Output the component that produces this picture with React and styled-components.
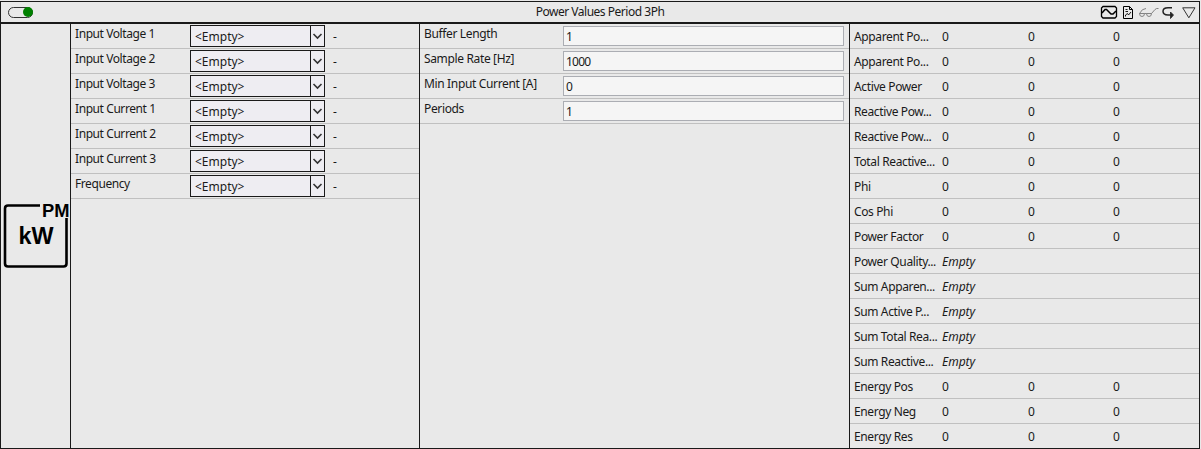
import React from 'react';
import styled, { createGlobalStyle, ThemeProvider } from 'styled-components';

const theme = {
   bg: '#e9e9e9',
   line: '#1a1a1a',
   rule: '#c0c0c0',
   text: '#1a1a1a',
   select: '#eeedf2',
   input: '#f5f5f5',
   inputBorder: '#abadb3',
   green: '#008000'
};

const inputs = [
   'Input Voltage 1',
   'Input Voltage 2',
   'Input Voltage 3',
   'Input Current 1',
   'Input Current 2',
   'Input Current 3',
   'Frequency'
];

const settings = [
   { label: 'Buffer Length', value: '1' },
   { label: 'Sample Rate [Hz]', value: '1000' },
   { label: 'Min Input Current [A]', value: '0' },
   { label: 'Periods', value: '1' }
];

const outputs = [
   { label: 'Apparent Po...', values: [0, 0, 0] },
   { label: 'Apparent Po...', values: [0, 0, 0] },
   { label: 'Active Power', values: [0, 0, 0] },
   { label: 'Reactive Pow...', values: [0, 0, 0] },
   { label: 'Reactive Pow...', values: [0, 0, 0] },
   { label: 'Total Reactive...', values: [0, 0, 0] },
   { label: 'Phi', values: [0, 0, 0] },
   { label: 'Cos Phi', values: [0, 0, 0] },
   { label: 'Power Factor', values: [0, 0, 0] },
   { label: 'Power Quality...' },
   { label: 'Sum Apparen...' },
   { label: 'Sum Active P...' },
   { label: 'Sum Total Rea...' },
   { label: 'Sum Reactive...' },
   { label: 'Energy Pos', values: [0, 0, 0] },
   { label: 'Energy Neg', values: [0, 0, 0] },
   { label: 'Energy Res', values: [0, 0, 0] }
];

const HeaderIcons = () => (
   <svg width="100" height="16" viewBox="0 0 100 16" fill="none" stroke="#000">
      <path d="M4 2.500 h12 l1.500 1.500 v8.500 l-1.500 1.500 h-12 l-1.500 -1.500 v-8.500z" strokeWidth="1.300" />
      <path d="M3 9 L6 5.500 H7.500 L12 10 H14 L17 7" strokeWidth="1.500" />
      <path d="M24.500 2.500 h6 l3 3 v9 h-9z M30.500 2.500 v3 h3" />
      <path d="M26.500 5.500 h2 M26.500 7.500 h2.500 M26.500 12.500 v-1.500 l2-1.500 1 1.500 2.500-3" strokeWidth="0.900" />
      <g stroke="#777" strokeWidth="0.900">
         <path d="M40.500 9.500 h5 q0 3-2.500 3 q-2.500 0-2.500-3z M47.500 9.500 h5 q0 3-2.500 3 q-2.500 0-2.500-3z M45.500 9.500 h2" />
         <path d="M40.500 9.500 Q43 4.500 47 4.500 M52.500 9.500 L56 5.500 Q57.500 4 59.500 4.500" />
      </g>
      <path d="M73 3.700 h-4 q-5 0-5 3.600 q0 3.700 5 3.700 h3" stroke="#222" strokeWidth="1.500" />
      <path d="M71.500 8 l3 3 -3 3.500z" fill="#222" stroke="#222" strokeWidth="0.800" />
      <path d="M83.700 3.800 h12.300 l-6.150 10z" stroke="#333" />
   </svg>
);

const Logo = () => (
   <LogoSvg width="70" height="72" viewBox="0 0 70 72">
      <path d="M39 6.500 H7 Q4 6.500 4 9.500 V64.500 Q4 67.500 7 67.500 H62.500 Q65.500 67.500 65.500 64.500 V19" fill="none" stroke="#000" strokeWidth="2.600" />
      <text x="41" y="17.500" fontSize="18" textLength="27.500" lengthAdjust="spacingAndGlyphs">PM</text>
      <text x="17.500" y="45" fontSize="23" textLength="35" lengthAdjust="spacingAndGlyphs">kW</text>
   </LogoSvg>
);

const App = () => (
   <ThemeProvider theme={theme}>
      <GlobalStyle />
      <Block>
         <Header>
            <Toggle><Knob /></Toggle>
            <Title>Power Values Period 3Ph</Title>
            <HeaderIcons />
         </Header>
         <Body>
            <IconColumn><Logo /></IconColumn>
            <Column>
               {inputs.map(label => (
                  <Row key={label}>
                     <Label $width={115} $spacing="-0.42px">{label}</Label>
                     <Select>
                        <SelectValue>&lt;Empty&gt;</SelectValue>
                        <SelectArrow>
                           <svg width="12" height="10" viewBox="0 0 12 10">
                              <path d="M1.500 3 L5.500 7 L9.500 3" fill="none" stroke="#333" strokeWidth="1.600" />
                           </svg>
                        </SelectArrow>
                     </Select>
                     <Unit>-</Unit>
                  </Row>
               ))}
            </Column>
            <Column>
               {settings.map(({ label, value }) => (
                  <Row key={label}>
                     <Label $width={139} $spacing="-0.35px">{label}</Label>
                     <Field>{value}</Field>
                  </Row>
               ))}
            </Column>
            <Column>
               {outputs.map(({ label, values }, i) => (
                  <OutputRow key={i}>
                     <OutputLabel>{label}</OutputLabel>
                     {
                        values
                           ? values.map((value, j) => <span key={j}>{value}</span>)
                           : <Empty>Empty</Empty>
                     }
                  </OutputRow>
               ))}
            </Column>
         </Body>
      </Block>
   </ThemeProvider>
);

export default App;

const GlobalStyle = createGlobalStyle`
   * {
      box-sizing: border-box;
   }
   body {
      background: ${theme.bg};
      margin: 0;
      overflow: hidden;
   }
`;

const Block = styled.div`
   background: ${props => props.theme.bg};
   border: 1px solid ${props => props.theme.line};
   color: ${props => props.theme.text};
   display: flex;
   flex-direction: column;
   font-family: 'Noto Sans', 'Open Sans', sans-serif;
   font-size: 12px;
   height: 448px;
   line-height: 16px;
   margin-top: 1px;
   white-space: nowrap;
   width: 1200px;
   svg {
      display: block;
   }
`;

const Header = styled.div`
   align-items: center;
   border-bottom: 2px solid ${props => props.theme.line};
   display: grid;
   flex: none;
   grid-template-columns: 100px 1fr 100px;
   height: 22px;
`;

const Toggle = styled.div`
   align-items: center;
   border: 1px solid #333;
   border-radius: 6px;
   display: flex;
   height: 11px;
   justify-content: flex-end;
   margin-left: 7px;
   width: 25px;
`;

const Knob = styled.div`
   background: ${props => props.theme.green};
   border-radius: 50%;
   flex: none;
   height: 10px;
   margin-right: -1px;
   width: 10px;
`;

const Title = styled.div`
   letter-spacing: -0.48px;
   text-align: center;
`;

const Body = styled.div`
   display: grid;
   flex: 1;
   grid-template-columns: 69px 349px 430px 350px;
   min-height: 0;
`;

const IconColumn = styled.div`
   padding-top: 175px;
`;

const LogoSvg = styled.svg`
   font-family: 'Liberation Sans', Arial, sans-serif;
   font-weight: bold;
`;

const Column = styled.div`
   border-left: 1px solid ${props => props.theme.line};
   overflow: hidden;
`;

const Row = styled.div`
   border-bottom: 1px solid ${props => props.theme.rule};
   display: flex;
   height: 25px;
   padding-left: 4px;
`;

const Label = styled.div`
   flex: none;
   letter-spacing: ${props => props.$spacing};
   padding-top: 2px;
   width: ${props => props.$width}px;
`;

const Select = styled.div`
   background: ${props => props.theme.select};
   border: 1px solid ${props => props.theme.line};
   display: flex;
   height: 22px;
   margin-top: 1px;
   width: 135px;
`;

const SelectValue = styled.div`
   flex: 1;
   padding: 3px 0 0 4px;
`;

const SelectArrow = styled.div`
   align-items: center;
   border-left: 1px solid ${props => props.theme.line};
   display: flex;
   justify-content: center;
   width: 14px;
`;

const Unit = styled.div`
   padding: 5px 0 0 8px;
`;

const Field = styled.div`
   background: ${props => props.theme.input};
   border: 1px solid ${props => props.theme.inputBorder};
   height: 20px;
   letter-spacing: -0.75px;
   margin-top: 2px;
   padding: 2px 0 0 2px;
   width: 281px;
`;

const OutputRow = styled.div`
   border-bottom: 1px solid ${props => props.theme.rule};
   display: grid;
   grid-template-columns: 88px 86px 85px 1fr;
   height: 25px;
   padding: 5px 0 0 4px;
   &:last-child {
      border-bottom: none;
   }
`;

const OutputLabel = styled.span`
   letter-spacing: -0.37px;
`;

const Empty = styled.em`
   font-style: italic;
`;
